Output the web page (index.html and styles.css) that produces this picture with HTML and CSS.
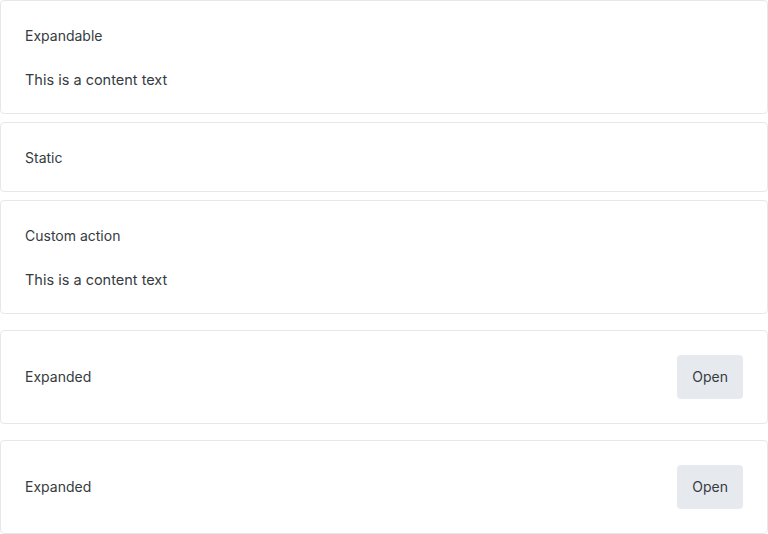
FILE: index.html
```html
<!DOCTYPE html>
<html>
<head>
<meta charset="utf-8">
<link rel="stylesheet" href="styles.css">
</head>
<body>
<div class="list">
  <div class="group">
    <section class="card">
      <div class="title">Expandable</div>
      <div class="content">This is a content text</div>
    </section>
    <section class="card">
      <div class="title">Static</div>
    </section>
    <section class="card">
      <div class="title">Custom action</div>
      <div class="content">This is a content text</div>
    </section>
  </div>
  <div class="group wide">
    <section class="card row">
      <div class="title">Expanded</div>
      <button class="btn">Open</button>
    </section>
    <section class="card row">
      <div class="title">Expanded</div>
      <button class="btn">Open</button>
    </section>
  </div>
</div>
</body>
</html>
```
FILE: styles.css
```css
html, body { margin: 0; padding: 0; background: #fff; }
body { font-family: Inter, "Noto Sans", sans-serif; font-size: 14px; line-height: 20px; color: #363b42; }
.list { display: flex; flex-direction: column; gap: 16px; }
.group { display: flex; flex-direction: column; gap: 8px; }
.group.wide { gap: 16px; }
.card { border: 1px solid #e5e8eb; border-radius: 4px; padding: 25px 24px 23px; display: flex; flex-direction: column; gap: 24px; }
.content { font-size: 14.5px; }
.card.row { flex-direction: row; align-items: center; justify-content: space-between; gap: 0; padding: 24px; }
.btn { font: inherit; color: inherit; background: #e6eaee; border: none; border-radius: 4px; height: 44px; padding: 0 15px; }
```
